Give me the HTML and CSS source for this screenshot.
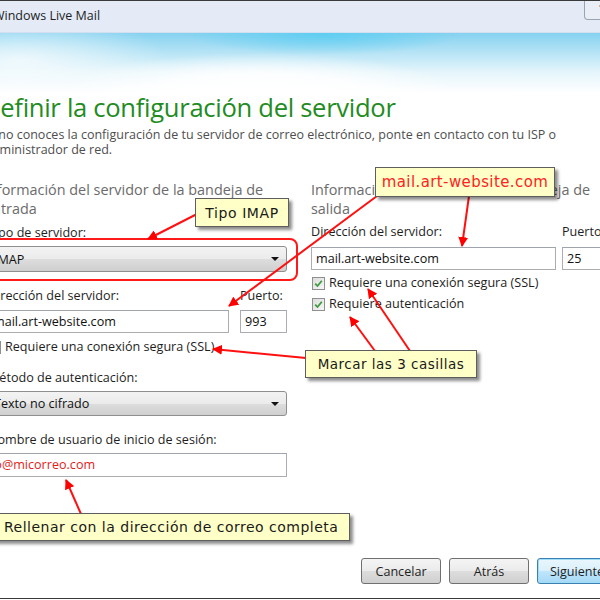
FILE: index.html
```html
<!DOCTYPE html>
<html lang="es">
<head>
<meta charset="utf-8">
<title>Windows Live Mail</title>
<link rel="stylesheet" href="styles.css">
</head>
<body>
<div class="window">
  <div class="titlebar">
    <span class="title">Windows Live Mail</span>
    <span class="help">?</span>
  </div>
  <div class="banner"></div>
  <div class="content">
    <h1 class="heading">Definir la configuración del servidor</h1>
    <p class="desc">Si no conoces la configuración de tu servidor de correo electrónico, ponte en contacto con tu ISP o<br>administrador de red.</p>
    <div class="columns">
      <div class="col col-left">
        <div class="sechead">Información del servidor de la bandeja de<br>entrada</div>
        <div class="label l-tipo">Tipo de servidor:</div>
        <div class="select s-tipo"><span>IMAP</span><i class="caret"></i></div>
        <div class="pair pair-left">
          <div class="field">
            <div class="label">Dirección del servidor:</div>
            <div class="input">mail.art-website.com</div>
          </div>
          <div class="field">
            <div class="label">Puerto:</div>
            <div class="input">993</div>
          </div>
        </div>
        <div class="check c-left"><span class="cb"><svg viewBox="0 0 11 11" width="11" height="11"><path d="M2.2 5.6 L4.5 8 L8.8 2.8" fill="none" stroke="#3e9a3e" stroke-width="1.8"/></svg></span>Requiere una conexión segura (SSL)</div>
        <div class="label l-metodo">Método de autenticación:</div>
        <div class="select s-metodo"><span>Texto no cifrado</span><i class="caret"></i></div>
        <div class="label l-nombre">Nombre de usuario de inicio de sesión:</div>
        <div class="input i-nombre red">yo@micorreo.com</div>
      </div>
      <div class="col col-right">
        <div class="sechead">Información del servidor de la bandeja de<br>salida</div>
        <div class="pair pair-right">
          <div class="field">
            <div class="label">Dirección del servidor:</div>
            <div class="input">mail.art-website.com</div>
          </div>
          <div class="field">
            <div class="label">Puerto:</div>
            <div class="input">25</div>
          </div>
        </div>
        <div class="check c-r1"><span class="cb"><svg viewBox="0 0 11 11" width="11" height="11"><path d="M2.2 5.6 L4.5 8 L8.8 2.8" fill="none" stroke="#3e9a3e" stroke-width="1.8"/></svg></span>Requiere una conexión segura (SSL)</div>
        <div class="check c-r2"><span class="cb"><svg viewBox="0 0 11 11" width="11" height="11"><path d="M2.2 5.6 L4.5 8 L8.8 2.8" fill="none" stroke="#3e9a3e" stroke-width="1.8"/></svg></span>Requiere autenticación</div>
      </div>
    </div>
  </div>
  <div class="buttons">
    <button class="btn">Cancelar</button>
    <button class="btn">Atrás</button>
    <button class="btn btn-default">Siguiente</button>
  </div>
</div>

<div class="annotations">
  <div class="redbox"></div>
  <svg class="arrows" width="600" height="600" viewBox="0 0 600 600">
    <defs>
      <marker id="ah" viewBox="0 0 10 10" refX="9" refY="5" markerWidth="5" markerHeight="5" orient="auto">
        <path d="M0 0 L10 5 L0 10 z" fill="#ff0000"/>
      </marker>
    </defs>
    <g stroke="#ff1010" stroke-width="2" fill="none" marker-end="url(#ah)">
      <line x1="197" y1="214" x2="148" y2="239"/>
      <line x1="377" y1="196" x2="229" y2="306"/>
      <line x1="469" y1="196" x2="462" y2="246"/>
      <line x1="306" y1="358" x2="213" y2="349"/>
      <line x1="375" y1="351" x2="350" y2="317"/>
      <line x1="410" y1="351" x2="368" y2="289"/>
      <line x1="81" y1="514" x2="66" y2="480"/>
    </g>
  </svg>
  <div class="callout co-tipo">Tipo IMAP</div>
  <div class="callout co-mail">mail.art-website.com</div>
  <div class="callout co-marcar">Marcar las 3 casillas</div>
  <div class="callout co-rellenar">Rellenar con la dirección de correo completa</div>
</div>
</body>
</html>
```

FILE: styles.css
```css
html, body {
  margin: 0;
  padding: 0;
  width: 600px;
  height: 600px;
  overflow: hidden;
  background: #ffffff;
  font-family: "Open Sans", "Noto Sans", sans-serif;
}

.window {
  position: relative;
  margin-left: -20px;
  width: 660px;
  height: 598px;
  border-bottom: 1px solid #3a3a3a;
  display: flex;
  flex-direction: column;
  background: #ffffff;
}

.titlebar {
  height: 31px;
  border-top: 1px solid #3a3a3a;
  border-bottom: 1px solid #d3dff0;
  background: #e4ebf7;
  display: flex;
  align-items: flex-start;
}

.title {
  margin-left: 13px;
  margin-top: 7px;
  font-size: 12.5px;
  line-height: 16px;
  color: #1e1e1e;
}

.help {
  margin-left: 484px;
  width: 40px;
  height: 19px;
  border: 1px solid #9aa3b0;
  border-top: none;
  border-radius: 0 0 0 4px;
  background: #e9eef7;
  font-size: 10px;
  font-weight: bold;
  line-height: 17px;
  color: #333;
  padding-left: 14px;
  box-sizing: border-box;
}

.banner {
  height: 60px;
  background:
    radial-gradient(ellipse 200px 40px at 42% 100%, #ffffff 0%, rgba(255,255,255,0.85) 50%, rgba(255,255,255,0) 100%),
    radial-gradient(ellipse 150px 45px at 6% 45%, rgba(255,255,255,0.7) 0%, rgba(255,255,255,0) 100%),
    radial-gradient(ellipse 140px 22px at 52% 0%, rgba(90,205,242,0.9) 0%, rgba(90,205,242,0) 100%),
    linear-gradient(to bottom, #86d2f0 0%, #b2e2f5 30%, #e4f5fb 65%, #ffffff 100%);
}

.content {
  padding-left: 8px;
}

.heading {
  margin: 0 0 0 -6px;
  font-size: 25.6px;
  line-height: 30px;
  font-weight: normal;
  color: #228c22;
  letter-spacing: -0.3px;
}

.desc {
  margin: 4px 0 0 -3px;
  font-size: 12.5px;
  line-height: 15px;
  color: #4e4e4e;
}

.columns {
  margin-top: 23px;
  display: grid;
  grid-template-columns: 299px 300px;
  column-gap: 24px;
}

.col {
  display: flex;
  flex-direction: column;
}

.sechead {
  margin-left: -4px;
  font-size: 14.4px;
  line-height: 19px;
  color: #6b6b6b;
  white-space: nowrap;
}
.col-right .sechead { margin-left: 0; }

.label {
  font-size: 12.6px;
  line-height: 16px;
  color: #1e1e1e;
  white-space: nowrap;
}

.l-tipo { margin-top: 7px; }
.l-metodo { margin-top: 15px; }
.l-nombre { margin-top: 16px; }

.select {
  position: relative;
  box-sizing: border-box;
  border: 1px solid #8e8f8f;
  border-radius: 3px;
  background: linear-gradient(to bottom, #f3f3f3 0%, #ebebeb 50%, #dddddd 51%, #cfcfcf 100%);
  font-size: 12.6px;
  color: #111;
  display: flex;
  align-items: center;
  padding-left: 5px;
}

.s-tipo { margin-top: 5px; height: 26px; }
.s-metodo { margin-top: 5px; height: 25px; }

.caret {
  position: absolute;
  right: 7px;
  top: 50%;
  margin-top: -2px;
  width: 0;
  height: 0;
  border-left: 4px solid transparent;
  border-right: 4px solid transparent;
  border-top: 4px solid #111;
}

.input {
  box-sizing: border-box;
  height: 23px;
  border: 1px solid #abadb3;
  border-top-color: #a0a4ad;
  background: #ffffff;
  font-size: 12.6px;
  line-height: 21px;
  padding-left: 4px;
  color: #111;
  white-space: nowrap;
  overflow: hidden;
}

.input.red { color: #e51b1b; }
.i-nombre { margin-top: 5px; height: 24px; text-indent: -5px; }

.pair {
  display: grid;
}
.pair-left {
  margin-top: 16px;
  grid-template-columns: 241px 47px;
  column-gap: 11px;
}
.pair-right {
  margin-top: 6px;
  grid-template-columns: 245px 50px;
  column-gap: 6px;
}
.field .input { margin-top: 6px; }
.pair-right .field .input { margin-top: 7px; }

.check {
  display: flex;
  align-items: center;
  font-size: 12.6px;
  line-height: 16px;
  color: #1e1e1e;
  white-space: nowrap;
}
.c-left { margin-top: 6px; }
.c-r1 { margin-top: 5px; margin-left: 1px; }
.c-r2 { margin-top: 5px; margin-left: 1px; }

.cb {
  box-sizing: border-box;
  width: 13px;
  height: 13px;
  border: 1px solid #8f8f8f;
  background: linear-gradient(135deg, #dcdcdc 0%, #f7f7f7 100%);
  margin-right: 4px;
  display: flex;
  align-items: center;
  justify-content: center;
}

.buttons {
  margin-top: auto;
  padding-bottom: 14px;
  padding-right: 23px;
  display: flex;
  justify-content: flex-end;
  gap: 8px;
}

.btn {
  box-sizing: border-box;
  width: 80px;
  height: 26px;
  border: 1px solid #707070;
  border-radius: 3px;
  background: linear-gradient(to bottom, #f4f4f4 0%, #ebebeb 50%, #dddddd 51%, #cfcfcf 100%);
  font-family: "Open Sans", "Noto Sans", sans-serif;
  font-size: 12.6px;
  color: #1e1e1e;
  padding: 0;
}

.btn-default {
  border-color: #3c7fb1;
  box-shadow: inset 0 0 0 1px #9fdcf7;
  background: linear-gradient(to bottom, #eaf6fd 0%, #d9f0fc 50%, #bee6fd 51%, #a7d9f5 100%);
}

/* annotations layered over the dialog */
.annotations {
  position: absolute;
  left: 0;
  top: 0;
  width: 600px;
  height: 600px;
  pointer-events: none;
}

.arrows {
  position: absolute;
  left: 0;
  top: 0;
}

.redbox {
  position: absolute;
  left: -20px;
  top: 238px;
  width: 314px;
  height: 39px;
  border: 2px solid #ff1a1a;
  border-radius: 8px;
}

.callout {
  position: absolute;
  box-sizing: border-box;
  background: #ffffc8;
  border: 1px solid #5e5e5e;
  box-shadow: 3px 3px 3px rgba(0, 0, 0, 0.45);
  font-family: "DejaVu Sans", Verdana, sans-serif;
  color: #1a1a1a;
  white-space: nowrap;
  display: flex;
  align-items: center;
  justify-content: center;
}

.co-tipo {
  left: 195px;
  top: 198px;
  width: 94px;
  height: 29px;
  font-size: 14px;
  letter-spacing: 0.6px;
}

.co-mail {
  left: 375px;
  top: 167px;
  width: 180px;
  height: 30px;
  font-size: 15px;
  letter-spacing: 0.4px;
  color: #ff2222;
}

.co-marcar {
  left: 305px;
  top: 350px;
  width: 172px;
  height: 28px;
  font-size: 13.5px;
  letter-spacing: 0.5px;
}

.co-rellenar {
  left: -10px;
  top: 513px;
  width: 360px;
  height: 28px;
  font-size: 14px;
  letter-spacing: 0.5px;
  justify-content: flex-start;
  padding-left: 13px;
}
```
